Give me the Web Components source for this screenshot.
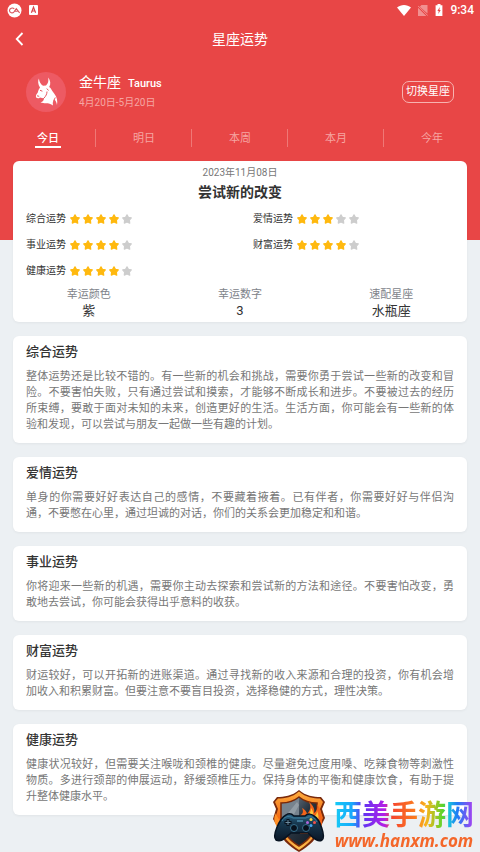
<!DOCTYPE html>
<html lang="zh-CN">
<head>
<meta charset="utf-8">
<meta name="viewport" content="width=device-width, initial-scale=1">
<title>星座运势</title>
<style>
    body {
        margin: 0;
        background: #ecf0f3;
        font-family: Roboto, "Noto Sans CJK SC", sans-serif;
        color: #333;
    }
</style>
</head>
<body>
<horoscope-page></horoscope-page>
<site-badge></site-badge>

<script>
const STAR = 'M5 .8 6.400 3.300 9.300 3.900 7.400 6.100 7.700 9.100 5 7.900 2.300 9.100 2.600 6.100 .7 3.900 3.600 3.300Z';

class StatusBar extends HTMLElement {
    constructor(){
        super();
        this.inner = this.attachShadow({mode: "open"});
        this.inner.innerHTML = `
            <style>
                :host{
                    display: flex;
                    align-items: center;
                    justify-content: space-between;
                    height: 20px;
                    padding: 0 6px 0 7px;
                    color: white;
                    font-size: 12px;
                    font-weight: 500;
                    line-height: 20px;
                }
                div{
                    display: flex;
                    align-items: center;
                    gap: 7px;
                }
                svg{
                    display: block;
                }
            </style>
            <div>
                <svg width="15" height="15" viewBox="0 0 15 15">
                    <circle cx="7.500" cy="7.500" r="7" fill="#fff"/>
                    <path d="M7.300 5.800C5.500 4.300 2.500 5.300 2.500 7.600s3 3 4.500 1.200L9.300 5.600 12.600 9.800M8 8.300h2.600" fill="none" stroke="#d9545c" stroke-width="1.100"/>
                </svg>
                <svg width="9" height="10" viewBox="0 0 9 10">
                    <rect width="9" height="10" rx="1" fill="#fff"/>
                    <path d="M2.400 7.800 4.500 2.200 6.600 7.800M3.200 6h2.600" fill="none" stroke="#d9444a" stroke-width="1.200"/>
                </svg>
            </div>
            <div>
                <svg width="14" height="11" viewBox="0 0 14 11"><path d="M0 2.600C4-.8 10-.8 14 2.600L7 11Z" fill="#fff"/></svg>
                <svg width="10" height="11" viewBox="0 0 10 11" opacity=".4">
                    <path d="M3.500 0H9.500V8.500L1.800 1.700ZM0 2.800 8.300 11H0Z" fill="#fff"/>
                    <path d="M0 .8 9.800 10.600" stroke="#fff"/>
                </svg>
                <svg width="8" height="12" viewBox="0 0 8 12">
                    <path d="M2.500 0h3v1.200H7.400V12H.6V1.200H2.500Z" fill="#fff"/>
                    <path d="M4.800 3 2.400 7H3.700L3.300 10 5.700 6H4.400Z" fill="#e84646"/>
                </svg>
                <span>9:34</span>
            </div>
        `;
    }
}
customElements.define('status-bar', StatusBar);

class NavBar extends HTMLElement {
    constructor(){
        super();
        this.inner = this.attachShadow({mode: "open"});
        this.inner.innerHTML = `
            <style>
                :host{
                    display: grid;
                    grid-template-columns: 40px 1fr 40px;
                    align-items: center;
                    height: 38px;
                    color: white;
                }
                button{
                    display: flex;
                    padding: 8px 15px;
                    border: 0;
                    background: none;
                    color: inherit;
                    cursor: pointer;
                }
                h1{
                    margin: 0;
                    font-size: 14px;
                    font-weight: 400;
                    line-height: 20px;
                    text-align: center;
                }
            </style>
            <button type="button" aria-label="返回">
                <svg width="9" height="14" viewBox="0 0 9 14"><path d="M7.500 1 1.700 7 7.500 13" fill="none" stroke="currentColor" stroke-width="1.800"/></svg>
            </button>
            <h1><slot></slot></h1>
        `;
    }
}
customElements.define('nav-bar', NavBar);

class SignProfile extends HTMLElement {
    constructor(){
        super();
        this.inner = this.attachShadow({mode: "open"});
        this.inner.innerHTML = `
            <style>
                :host{
                    display: flex;
                    align-items: center;
                    gap: 13px;
                    padding: 13px 26px;
                    color: white;
                }
                svg{
                    flex: none;
                }
                .name{
                    display: flex;
                    flex: 1;
                    flex-direction: column;
                }
                h2{
                    display: flex;
                    align-items: baseline;
                    gap: 7px;
                    margin: 0;
                    font-size: 14px;
                    font-weight: 400;
                    line-height: 22px;
                }
                small{
                    font-size: 11px;
                    font-weight: 500;
                    line-height: 14px;
                }
                .range{
                    font-size: 10px;
                    line-height: 20px;
                    color: #f5a6a4;
                }
                button{
                    height: 22px;
                    padding: 0 3px;
                    border: 1px solid #f7b3b0;
                    border-radius: 7px;
                    background: none;
                    color: inherit;
                    font: inherit;
                    font-size: 11px;
                    line-height: 20px;
                    cursor: pointer;
                }
            </style>
            <svg width="40" height="40" viewBox="0 0 40 40">
                <circle cx="20" cy="20" r="20" fill="#ed5a63"/>
                <path d="M14 15.500C12 12.500 11.600 9 12.900 6.500 13.400 10 14.600 12.200 17 13.800L20 13.600C22.200 11.500 22.900 8.500 22 5.500 24.600 8.500 25 12 23.200 15L24.500 16C25.500 18 27 20 28.500 22 31 25 31.800 29 31 33 30.400 30 29.700 28.200 28 27.500 26.800 29 26.500 31 27 33.500 24.500 31.500 22 31 18.500 31.200L14.500 30.500C16.800 29.800 17.800 28.500 18 26.500L14 25.500C12.500 26.800 11 26.500 10 25.300 9.600 23.500 10.500 22 11.800 20.500 12.400 18.500 12.800 17 14 15.500Z" fill="#fff"/>
                <path d="M14 18.300 16.400 19.200M11 23.800 13.200 24.300M20.800 16.500 22.500 18.500M21 19.500C21 22 20 24 17.800 26.300L14.800 28.800M29.300 25.500 27.800 28.500" fill="none" stroke="#e85a61" stroke-width="1"/>
            </svg>
            <div class="name">
                <h2><slot name="sign"></slot><small><slot name="latin"></slot></small></h2>
                <span class="range"><slot name="range"></slot></span>
            </div>
            <button type="button">切换星座</button>
        `;
    }
}
customElements.define('sign-profile', SignProfile);

class PeriodTabs extends HTMLElement {
    constructor(){
        super();
        this.inner = this.attachShadow({mode: "open"});
        const tabs = this.getAttribute('items').split(' ');
        this.inner.innerHTML = `
            <style>
                :host{
                    display: grid;
                    grid-template-columns: repeat(5, 1fr);
                    height: 24px;
                }
                button{
                    display: flex;
                    justify-content: center;
                    padding: 0;
                    border: 0;
                    background: linear-gradient(#ef7876, #ef7876) right center / 1px 18px no-repeat;
                    color: #f6a5a2;
                    font: inherit;
                    font-size: 11px;
                    cursor: pointer;
                }
                button:last-child{
                    background: none;
                }
                span{
                    box-sizing: border-box;
                    height: 22px;
                    padding: 0 2px;
                    line-height: 26px;
                    border-bottom: 2px solid transparent;
                }
                [aria-selected="true"]{
                    color: white;
                    font-weight: 500;
                }
                [aria-selected="true"] span{
                    border-color: white;
                }
            </style>
            ${tabs.map((tab, i) => `<button type="button" role="tab" aria-selected="${i === 0}"><span>${tab}</span></button>`).join('')}
        `;
        this.setAttribute('role', 'tablist');
        this.inner.addEventListener("click", (e) => {
            const picked = e.target.closest('button');
            if (!picked) return;
            this.inner.querySelectorAll('button').forEach((b) => b.setAttribute('aria-selected', b === picked));
        });
    }
}
customElements.define('period-tabs', PeriodTabs);

class StarRating extends HTMLElement {
    constructor(){
        super();
        this.inner = this.attachShadow({mode: "open"});
        const score = Number(this.getAttribute('score'));
        this.inner.innerHTML = `
            <style>
                :host{
                    display: flex;
                    align-items: center;
                    gap: 4px;
                    padding: 0 13px;
                    font-size: 10px;
                    line-height: 26px;
                }
                div{
                    display: flex;
                    gap: 3px;
                }
            </style>
            <span><slot></slot></span>
            <div role="img" aria-label="${score}/5">
                ${[1, 2, 3, 4, 5].map((n) => `
                    <svg width="10" height="10" viewBox="0 0 10 10"><path d="${STAR}" fill="${n <= score ? '#ffb90f' : '#cdcdcd'}" stroke="${n <= score ? '#ffb90f' : '#cdcdcd'}" stroke-width="1.200" stroke-linejoin="round"/></svg>
                `).join('')}
            </div>
        `;
    }
}
customElements.define('star-rating', StarRating);

class LuckyItem extends HTMLElement {
    constructor(){
        super();
        this.inner = this.attachShadow({mode: "open"});
        this.inner.innerHTML = `
            <style>
                :host{
                    display: flex;
                    flex-direction: column;
                    align-items: center;
                    font-size: 13px;
                    line-height: 16px;
                }
                span{
                    font-size: 11px;
                    color: #80838a;
                }
            </style>
            <span>${this.getAttribute('label')}</span>
            <slot></slot>
        `;
    }
}
customElements.define('lucky-item', LuckyItem);

class SummaryCard extends HTMLElement {
    constructor(){
        super();
        this.inner = this.attachShadow({mode: "open"});
        this.inner.innerHTML = `
            <style>
                :host{
                    display: block;
                    padding: 5px 0 3px;
                    border-radius: 6px;
                    background: white;
                    box-shadow: 0 1px 3px #0000000d;
                    text-align: center;
                }
                .date{
                    font-size: 10px;
                    line-height: 14px;
                    color: #777;
                }
                h2{
                    margin: 0;
                    font-size: 14px;
                    font-weight: 700;
                    line-height: 24px;
                }
                .ratings{
                    display: grid;
                    grid-template-columns: 1fr 1fr;
                    padding: 2px 0 3px;
                }
                .lucky{
                    display: grid;
                    grid-template-columns: repeat(3, 1fr);
                }
            </style>
            <div class="date"><slot name="date"></slot></div>
            <h2><slot name="title"></slot></h2>
            <div class="ratings"><slot name="rating"></slot></div>
            <div class="lucky"><slot name="lucky"></slot></div>
        `;
    }
}
customElements.define('summary-card', SummaryCard);

class FortuneCard extends HTMLElement {
    constructor(){
        super();
        this.inner = this.attachShadow({mode: "open"});
        this.inner.innerHTML = `
            <style>
                :host{
                    display: block;
                    padding: 7px 13px 10px;
                    border-radius: 6px;
                    background: white;
                    box-shadow: 0 1px 3px #0000000d;
                }
                h3{
                    margin: 0 0 8px;
                    font-size: 13px;
                    font-weight: 500;
                    line-height: 18px;
                }
                p{
                    margin: 0;
                    font-size: 11px;
                    line-height: 16px;
                    color: #777;
                    text-align: justify;
                }
            </style>
            <h3>${this.getAttribute('heading')}</h3>
            <p><slot></slot></p>
        `;
    }
}
customElements.define('fortune-card', FortuneCard);

class HoroscopePage extends HTMLElement {
    constructor(){
        super();
        this.inner = this.attachShadow({mode: "open"});
        this.inner.innerHTML = `
            <style>
                :host{
                    display: block;
                    padding-bottom: 36px;
                }
                /* the red area runs on behind the summary card */
                header{
                    padding-bottom: 90px;
                    background: #e84646;
                }
                main{
                    display: flex;
                    flex-direction: column;
                    gap: 14px;
                    margin: -79px 13px 0;
                }
            </style>
            <header>
                <status-bar></status-bar>
                <nav-bar>星座运势</nav-bar>
                <sign-profile>
                    <span slot="sign">金牛座</span>
                    <span slot="latin">Taurus</span>
                    <span slot="range">4月20日-5月20日</span>
                </sign-profile>
                <period-tabs items="今日 明日 本周 本月 今年"></period-tabs>
            </header>
            <main>
                <summary-card>
                    <span slot="date">2023年11月08日</span>
                    <span slot="title">尝试新的改变</span>
                    <star-rating slot="rating" score="4">综合运势</star-rating>
                    <star-rating slot="rating" score="3">爱情运势</star-rating>
                    <star-rating slot="rating" score="4">事业运势</star-rating>
                    <star-rating slot="rating" score="4">财富运势</star-rating>
                    <star-rating slot="rating" score="4">健康运势</star-rating>
                    <lucky-item slot="lucky" label="幸运颜色">紫</lucky-item>
                    <lucky-item slot="lucky" label="幸运数字">3</lucky-item>
                    <lucky-item slot="lucky" label="速配星座">水瓶座</lucky-item>
                </summary-card>
                <fortune-card heading="综合运势">整体运势还是比较不错的。有一些新的机会和挑战，需要你勇于尝试一些新的改变和冒险。不要害怕失败，只有通过尝试和摸索，才能够不断成长和进步。不要被过去的经历所束缚，要敢于面对未知的未来，创造更好的生活。生活方面，你可能会有一些新的体验和发现，可以尝试与朋友一起做一些有趣的计划。</fortune-card>
                <fortune-card heading="爱情运势">单身的你需要好好表达自己的感情，不要藏着掖着。已有伴者，你需要好好与伴侣沟通，不要憋在心里，通过坦诚的对话，你们的关系会更加稳定和和谐。</fortune-card>
                <fortune-card heading="事业运势">你将迎来一些新的机遇，需要你主动去探索和尝试新的方法和途径。不要害怕改变，勇敢地去尝试，你可能会获得出乎意料的收获。</fortune-card>
                <fortune-card heading="财富运势">财运较好，可以开拓新的进账渠道。通过寻找新的收入来源和合理的投资，你有机会增加收入和积累财富。但要注意不要盲目投资，选择稳健的方式，理性决策。</fortune-card>
                <fortune-card heading="健康运势">健康状况较好，但需要关注喉咙和颈椎的健康。尽量避免过度用嗓、吃辣食物等刺激性物质。多进行颈部的伸展运动，舒缓颈椎压力。保持身体的平衡和健康饮食，有助于提升整体健康水平。</fortune-card>
            </main>
        `;
    }
}
customElements.define('horoscope-page', HoroscopePage);

class SiteBadge extends HTMLElement {
    constructor(){
        super();
        this.inner = this.attachShadow({mode: "open"});
        this.inner.innerHTML = `
            <style>
                :host{
                    position: fixed;
                    right: 6px;
                    bottom: 0;
                    display: flex;
                    align-items: center;
                    gap: 8px;
                }
                div{
                    display: flex;
                    flex-direction: column;
                    align-self: flex-end;
                    align-items: center;
                }
                /* top padding keeps the gradient under the full glyph height */
                strong{
                    padding-top: 4px;
                    font-size: 28px;
                    font-weight: 700;
                    line-height: 26px;
                    background: linear-gradient(90deg, #16cdf5 0%, #18a8fb 13%, #5b35f2 20%, #b21ee8 36%, #f5442e 41%, #fb7b20 58%, #f7b51c 66%, #58d52c 78%, #19c3dd 82%, #1f7df5 88%, #b03df0 100%);
                    -webkit-background-clip: text;
                    background-clip: text;
                    color: transparent;
                }
                a{
                    font-family: "Open Sans", "Noto Sans", sans-serif;
                    font-size: 17px;
                    font-style: italic;
                    font-weight: 700;
                    line-height: 23px;
                    color: #f4672a;
                    text-decoration: none;
                }
            </style>
            <svg width="54" height="62" viewBox="0 0 54 62">
                <defs>
                    <linearGradient id="rim" x2="0" y2="1"><stop stop-color="#ffad3d"/><stop offset=".45" stop-color="#f26a16"/><stop offset="1" stop-color="#ffc24e"/></linearGradient>
                    <linearGradient id="steel" x2="1" y2="1"><stop stop-color="#8793a0"/><stop offset=".5" stop-color="#27333f"/><stop offset="1" stop-color="#10161f"/></linearGradient>
                    <linearGradient id="pad" x2="0" y2="1"><stop stop-color="#2b6587"/><stop offset=".35" stop-color="#17384f"/><stop offset="1" stop-color="#0b1727"/></linearGradient>
                </defs>
                <path d="M27 0C20 6 12 7 5 7L1 12 4 19 1 29 5 36C8 49 17 56 27 62 37 56 46 49 49 36L53 28 50 19 53 12 49 7C41 7 34 6 27 0Z" fill="#7a2a0c"/>
                <path d="M27 1.500C20 7.500 13 8.500 6 8.500L3 12 6 19 3 29 7 36C10 47 18 54 27 60 36 54 44 47 47 36L51 28 48 19 51 12 48 8.500C41 8.500 34 7.500 27 1.500Z" fill="url(#rim)"/>
                <path d="M27 7C21 12 14 13 9 13V28C9 42 17 50 27 56 37 50 45 42 45 28V13C40 13 33 12 27 7Z" fill="url(#steel)" stroke="#792909" stroke-width="1.500"/>
                <path d="M27 8C22 12 15 14 10 14V28H27Z" fill="#77838e"/>
                <path d="M13 27 25 12 27 15 20 28Z" fill="#a9b2ba" opacity=".55"/>
                <path d="M25 27C31 25 32 22 30 18 34 20 35 23 35 24 39 20 39 16 37 12 42 16 43 20 42 23 45 21 46 17 45 14 50 21 49 27 50 30 51 36 47 40 44 44H28Z" fill="#f4641a"/>
                <path d="M31 28C36 26 39 23 39 18 42 22 41 25 41 27 44 26 45 23 45 21 48 27 46 33 43 36Z" fill="#ffc83c"/>
                <path d="M4 23C5 28 8 29 9 34L6 38C2 33 1 28 4 23Z" fill="#ff8f26"/>
                <path d="M14 25C17 23 20 24 22 26H33C36 23 40 24 42 26 48 29 54 47 50 50 45 53 40 46 36 43H19C15 46 10 53 4 50 0 46 7 29 14 25Z" fill="url(#pad)" stroke="#071321" stroke-width="1.500"/>
                <path d="M10 31C12 27 16 25 21 28H34C39 25 43 28 45 32" fill="none" stroke="#42809d"/>
                <path d="M16 29v7M12.500 32.500h7" stroke="#07111d" stroke-width="3"/>
                <path d="M16 30v5M13.500 32.500h5" stroke="#6b8ba0"/>
                <circle cx="22" cy="38" r="3.500" fill="#07111c" stroke="#37708d"/>
                <circle cx="34" cy="38" r="3.500" fill="#07111c" stroke="#37708d"/>
                <circle cx="39" cy="29.500" r="1.500" fill="#ffdb46"/><circle cx="42.500" cy="32.500" r="1.500" fill="#f3514c"/>
                <circle cx="39" cy="35.500" r="1.500" fill="#46a4ef"/><circle cx="35.500" cy="32.500" r="1.500" fill="#b065dc"/>
                <path d="M25 31h6" stroke="#4f8cad" stroke-width="1.500"/>
            </svg>
            <div>
                <strong>西美手游网</strong>
                <a href="#">www.hanxm.com</a>
            </div>
        `;
    }
}
customElements.define('site-badge', SiteBadge);
</script>
</body>
</html>
